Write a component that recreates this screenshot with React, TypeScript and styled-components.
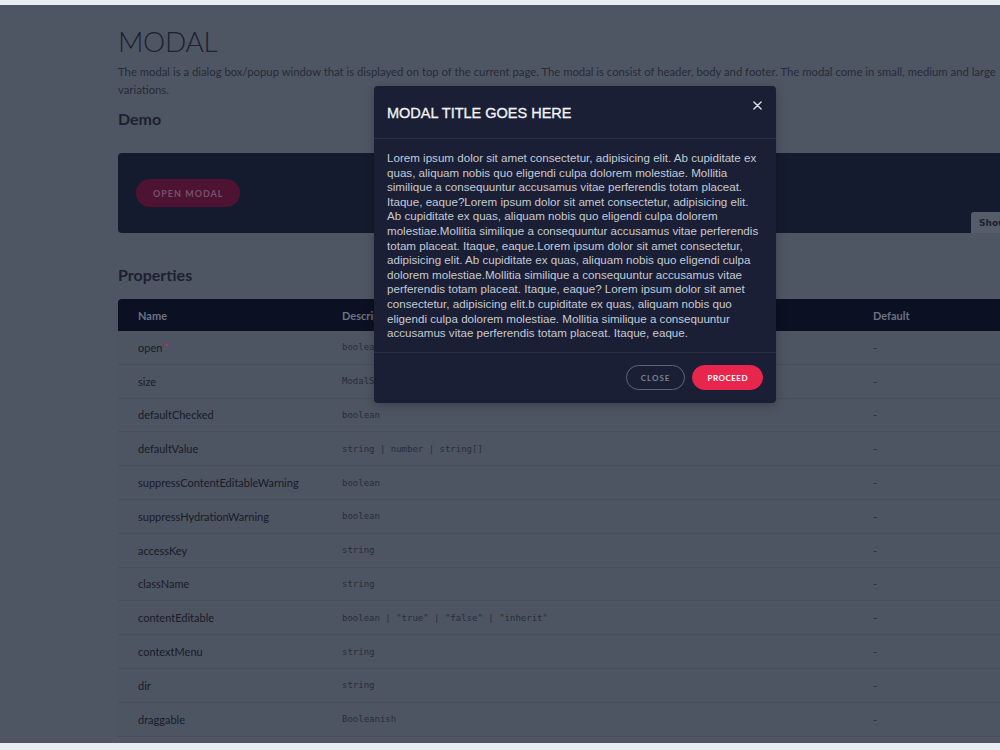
import React from "react";
import styled, { createGlobalStyle } from "styled-components";

const Global = createGlobalStyle`
  html, body { margin: 0; padding: 0; background: #e9eef3; }
  body { font-family: Lato, "Open Sans", sans-serif; overflow: hidden; }
  * { box-sizing: border-box; }
`;

const Frame = styled.div`
  position: relative;
  margin-top: 5px;
  height: 738px;
  overflow: hidden;
  background: #4f5663;
`;

const Content = styled.main`
  width: 900px;
  margin-left: 118px;
  padding-top: 20px;
`;

const Title = styled.h1`
  margin: 0;
  font-family: Lato, sans-serif;
  font-weight: 300;
  font-size: 28px;
  line-height: 32px;
  letter-spacing: -0.3px;
  color: #1c2130;
`;

const Lead = styled.p`
  margin: 6px 0 0;
  width: 890px;
  font-size: 11.3px;
  line-height: 18px;
  color: #262b39;
`;

const SectionTitle = styled.h2<{ $top: number }>`
  margin: ${(p) => p.$top}px 0 0;
  font-size: 16px;
  font-weight: 700;
  line-height: 20px;
  color: #1c2130;
`;

const DemoBox = styled.div`
  position: relative;
  margin-top: 24px;
  height: 80px;
  border-radius: 4px;
  background: #151b2e;
  display: flex;
  align-items: center;
  padding-left: 18px;
`;

const GhostPill = styled.button`
  height: 28px;
  padding: 0 17px;
  border: none;
  border-radius: 14px;
  background: #4e1232;
  color: #74536a;
  font-family: Lato, sans-serif;
  font-weight: 700;
  font-size: 9px;
  letter-spacing: 1px;
`;

const ShowTab = styled.span`
  position: absolute;
  left: 853px;
  bottom: 0;
  height: 21px;
  padding: 0 8px;
  display: flex;
  align-items: center;
  background: #565d6a;
  color: #1c2130;
  font-family: "DejaVu Sans", sans-serif;
  font-weight: 700;
  font-size: 9px;
  border-top-left-radius: 3px;
`;

const Table = styled.div`
  margin-top: 14px;
  background: #4e5562;
`;

const Row = styled.div<{ $head?: boolean }>`
  display: grid;
  grid-template-columns: 204px 531px 1fr;
  align-items: center;
  height: ${(p) => (p.$head ? "32px" : "33.8px")};
  background: ${(p) => (p.$head ? "#0b1122" : "transparent")};
  border-radius: ${(p) => (p.$head ? "4px 4px 0 0" : "0")};
  border-bottom: ${(p) => (p.$head ? "none" : "1px solid #474e5b")};
`;

const HeadCell = styled.div`
  padding-left: 20px;
  font-size: 11px;
  font-weight: 700;
  color: #6c7282;
`;

const NameCell = styled.div`
  padding-left: 20px;
  font-size: 11px;
  color: #171b28;
`;

const Req = styled.span`
  margin-left: 1px;
  font-weight: 700;
  color: #b8304c;
`;

const TypeCell = styled.div`
  padding-left: 20px;
  font-family: "DejaVu Sans Mono", monospace;
  font-size: 9px;
  color: #272d3a;
`;

const DefaultCell = styled.div`
  padding-left: 20px;
  font-size: 11px;
  color: #272d3a;
`;

const Backdrop = styled.div`
  position: absolute;
  inset: 0;
  display: flex;
  justify-content: center;
  align-items: flex-start;
  padding: 81px 0 0 150px;
`;

const Dialog = styled.div`
  width: 402px;
  border-radius: 4px;
  background: #1a1f35;
  box-shadow: 0 2px 10px rgba(0, 0, 0, 0.25);
  font-family: "Liberation Sans", Arial, sans-serif;
`;

const DialogHeader = styled.div`
  position: relative;
  height: 53px;
  padding: 0 13px;
  display: flex;
  align-items: center;
  border-bottom: 1px solid #283049;
`;

const DialogTitle = styled.h3`
  margin: 0;
  padding-top: 2px;
  font-size: 14.5px;
  font-weight: 400;
  color: #f3f4f7;
  -webkit-text-stroke: 0.3px #f3f4f7;
`;

const CloseX = styled.button`
  position: absolute;
  top: 10px;
  right: 10px;
  width: 18px;
  height: 18px;
  padding: 0;
  border: none;
  background: transparent;
  color: #d9dce3;
  display: flex;
  align-items: center;
  justify-content: center;
`;

const DialogBody = styled.div`
  padding: 12px 13px 11px;
  font-size: 11.6px;
  line-height: 14.6px;
  color: #c6cad4;
  border-bottom: 1px solid #283049;
`;

const DialogFooter = styled.div`
  height: 50px;
  padding: 0 13px;
  display: flex;
  align-items: center;
  justify-content: flex-end;
  gap: 7px;
`;

const Pill = styled.button<{ $primary?: boolean }>`
  height: 25px;
  padding: 0 14px;
  border-radius: 13px;
  border: 1px solid ${(p) => (p.$primary ? "#e8254d" : "#5e6478")};
  background: ${(p) => (p.$primary ? "#e8254d" : "transparent")};
  color: ${(p) => (p.$primary ? "#ffffff" : "#7b8193")};
  font-family: Lato, sans-serif;
  font-weight: 700;
  font-size: 8px;
  letter-spacing: ${(p) => (p.$primary ? "0.5px" : "1px")};
`;

const rows: { name: string; type: string; req?: boolean }[] = [
  { name: "open", type: "boolean", req: true },
  { name: "size", type: "ModalSize" },
  { name: "defaultChecked", type: "boolean" },
  { name: "defaultValue", type: "string | number | string[]" },
  { name: "suppressContentEditableWarning", type: "boolean" },
  { name: "suppressHydrationWarning", type: "boolean" },
  { name: "accessKey", type: "string" },
  { name: "className", type: "string" },
  { name: "contentEditable", type: 'boolean | "true" | "false" | "inherit"' },
  { name: "contextMenu", type: "string" },
  { name: "dir", type: "string" },
  { name: "draggable", type: "Booleanish" },
];

const body =
  "Lorem ipsum dolor sit amet consectetur, adipisicing elit. Ab cupiditate ex quas, aliquam nobis quo eligendi culpa dolorem molestiae. Mollitia similique a consequuntur accusamus vitae perferendis totam placeat. Itaque, eaque?Lorem ipsum dolor sit amet consectetur, adipisicing elit. Ab cupiditate ex quas, aliquam nobis quo eligendi culpa dolorem molestiae.Mollitia similique a consequuntur accusamus vitae perferendis totam placeat. Itaque, eaque.Lorem ipsum dolor sit amet consectetur, adipisicing elit. Ab cupiditate ex quas, aliquam nobis quo eligendi culpa dolorem molestiae.Mollitia similique a consequuntur accusamus vitae perferendis totam placeat. Itaque, eaque? Lorem ipsum dolor sit amet consectetur, adipisicing elit.b cupiditate ex quas, aliquam nobis quo eligendi culpa dolorem molestiae. Mollitia similique a consequuntur accusamus vitae perferendis totam placeat. Itaque, eaque.";

export default function App() {
  return (
    <>
      <Global />
      <Frame>
        <Content>
          <Title>MODAL</Title>
          <Lead>
            The modal is a dialog box/popup window that is displayed on top of the current page. The modal is consist
            of header, body and footer. The modal come in small, medium and large variations.
          </Lead>
          <SectionTitle $top={10}>Demo</SectionTitle>
          <DemoBox>
            <GhostPill>OPEN MODAL</GhostPill>
            <ShowTab>Show</ShowTab>
          </DemoBox>
          <SectionTitle $top={32}>Properties</SectionTitle>
          <Table>
            <Row $head>
              <HeadCell>Name</HeadCell>
              <HeadCell>Description</HeadCell>
              <HeadCell>Default</HeadCell>
            </Row>
            {rows.map((r) => (
              <Row key={r.name}>
                <NameCell>
                  {r.name}
                  {r.req && <Req>*</Req>}
                </NameCell>
                <TypeCell>{r.type}</TypeCell>
                <DefaultCell>-</DefaultCell>
              </Row>
            ))}
          </Table>
        </Content>
        <Backdrop>
          <Dialog role="dialog">
            <DialogHeader>
              <DialogTitle>MODAL TITLE GOES HERE</DialogTitle>
              <CloseX aria-label="close">
                <svg width="9" height="9" viewBox="0 0 10 10">
                  <path d="M1 1 L9 9 M9 1 L1 9" stroke="currentColor" strokeWidth="1.6" strokeLinecap="round" />
                </svg>
              </CloseX>
            </DialogHeader>
            <DialogBody>{body}</DialogBody>
            <DialogFooter>
              <Pill>CLOSE</Pill>
              <Pill $primary>PROCEED</Pill>
            </DialogFooter>
          </Dialog>
        </Backdrop>
      </Frame>
    </>
  );
}
